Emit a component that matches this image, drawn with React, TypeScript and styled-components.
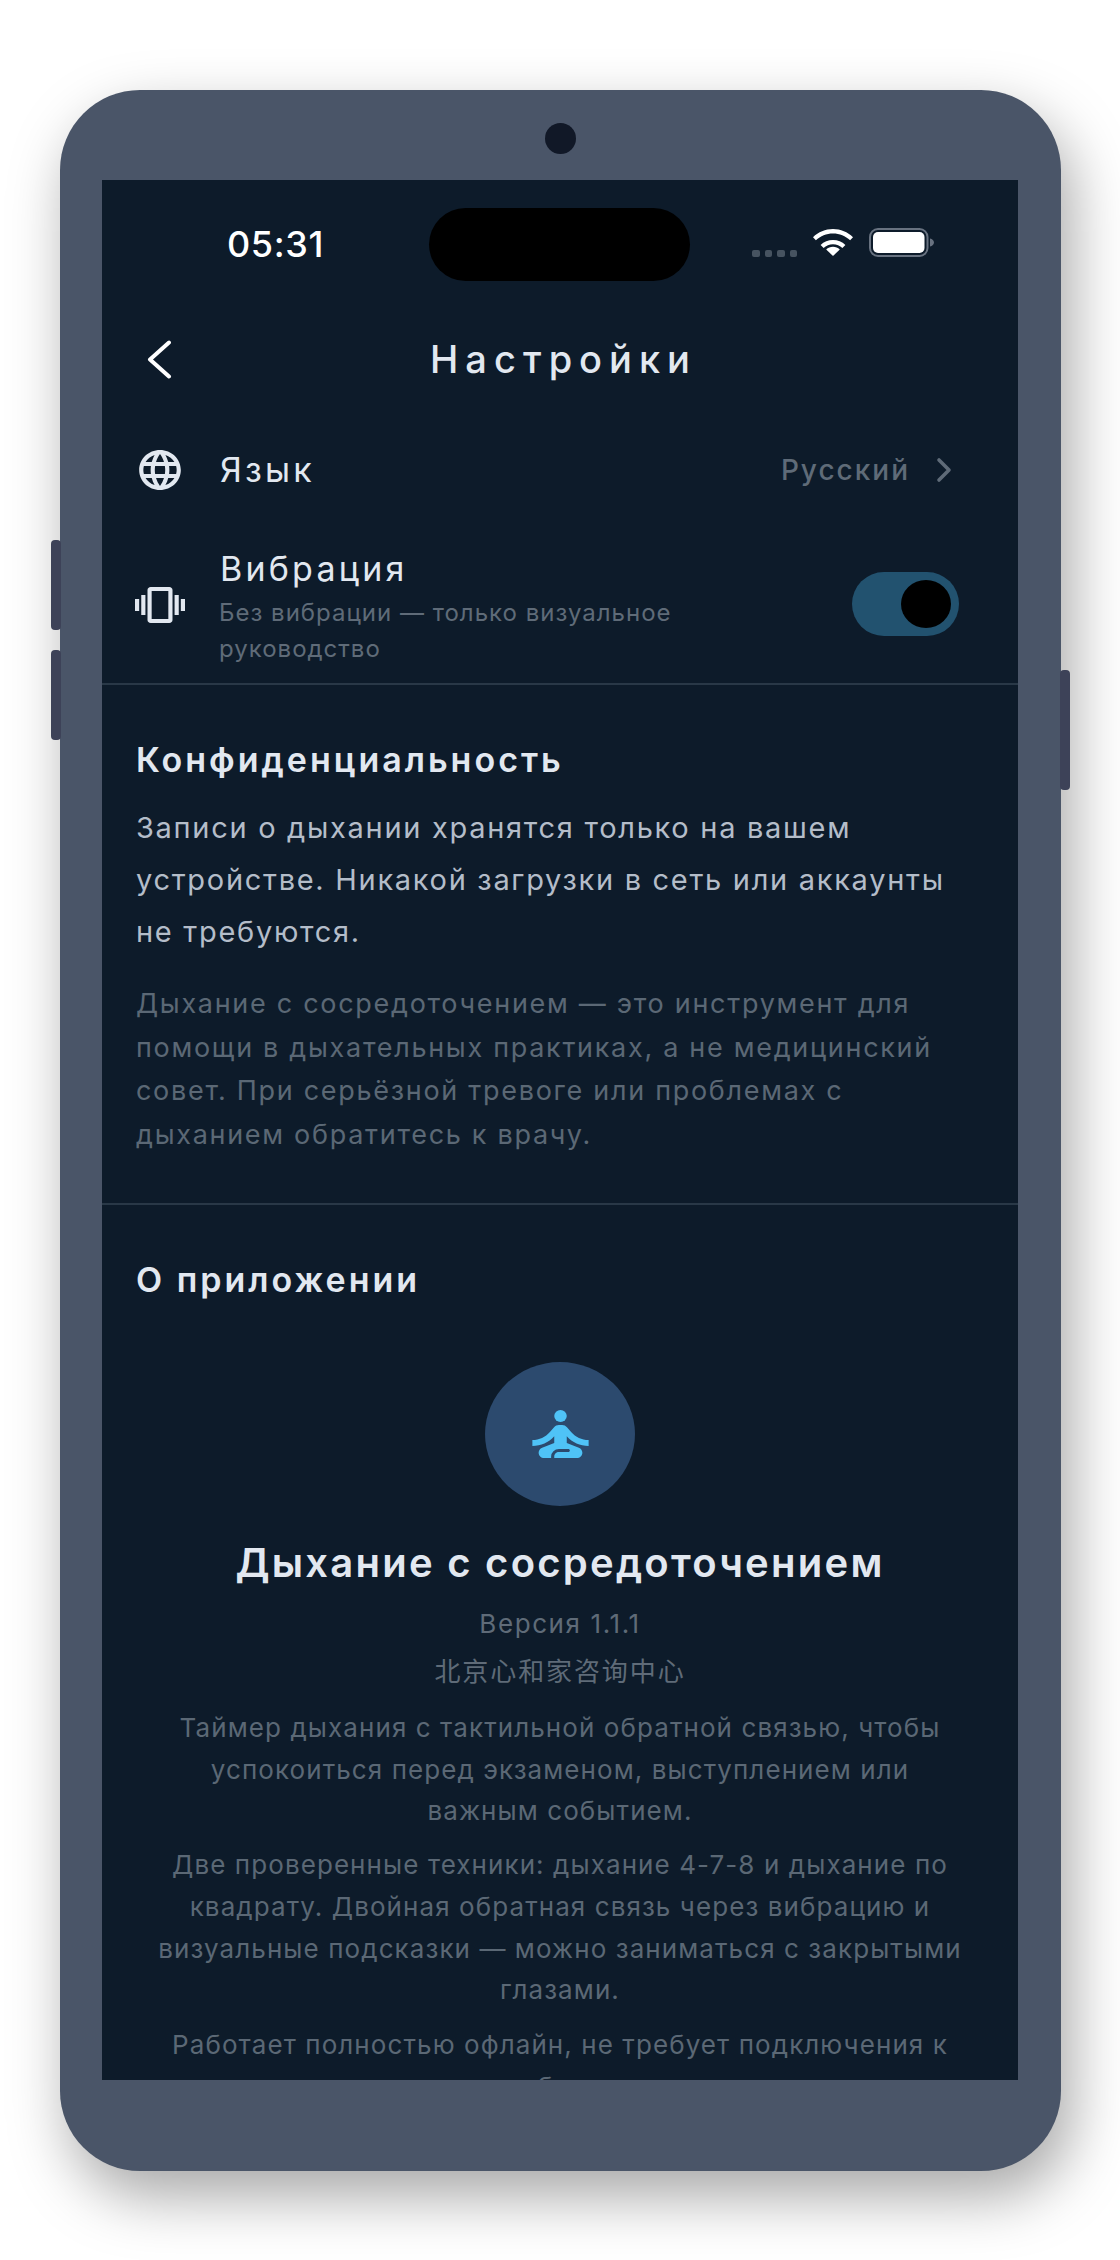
import styled, { createGlobalStyle } from "styled-components";
import { MdLanguage, MdSelfImprovement, MdVibration } from "react-icons/md";

const GlobalStyle = createGlobalStyle`
    html, body {
        margin: 0;
        padding: 0;
        background: #fff;
        overflow: hidden;
    }
    body {
        font-family: Inter, "Noto Sans CJK SC", sans-serif;
    }
`;

const Page = styled.div`
    width: 1120px;
    height: 2260px;
    padding: 90px 0 0 60px;
    box-sizing: border-box;
    overflow: hidden;
`;

const Phone = styled.div`
    position: relative;
    width: 1001px;
    height: 2081px;
    padding-left: 42px;
    box-sizing: border-box;
    background: #4a5568;
    border-radius: 80px;
    box-shadow: 10px 25px 60px rgba(0, 0, 0, 0.35);
`;

const SideButton = styled.div<{ $side: "left" | "right"; $top: number; $height: number }>`
    position: absolute;
    top: ${p => p.$top}px;
    height: ${p => p.$height}px;
    width: 10px;
    ${p => p.$side}: -9px;
    background: #3d4258;
    border-radius: 4px;
`;

const TopBezel = styled.div`
    width: 916px;
    height: 90px;
    display: flex;
    align-items: center;
    justify-content: center;
`;

const Camera = styled.div`
    width: 31px;
    height: 31px;
    margin-top: 6px;
    border-radius: 50%;
    background: #111827;
`;

const Screen = styled.div`
    width: 916px;
    height: 1900px;
    background: #0d1b2a;
    overflow: hidden;
`;

const StatusBar = styled.div`
    height: 124px;
    padding-top: 28px;
    box-sizing: border-box;
    display: grid;
    grid-template-columns: 327px 261px 1fr;
    align-items: start;
`;

const Time = styled.div`
    padding-left: 125px;
    height: 73px;
    line-height: 73px;
    font-size: 36px;
    font-weight: 500;
    letter-spacing: 0.6px;
    color: #fff;
`;

const Island = styled.div`
    height: 73px;
    background: #000;
    border-radius: 37px;
`;

const StatusIcons = styled.div`
    height: 73px;
    padding-left: 62px;
    display: flex;
    align-items: center;
    gap: 16px;
    margin-top: -2px;
`;

const SignalDots = styled.div`
    display: flex;
    gap: 5px;
    margin-top: 22px;
`;

const SignalDot = styled.span`
    width: 7.5px;
    height: 7px;
    border-radius: 2px;
    background: #465360;
`;

const HeaderBar = styled.div`
    height: 110px;
    padding-left: 45px;
    position: relative;
    display: flex;
    align-items: center;
`;

const Title = styled.div`
    position: absolute;
    left: 7px;
    right: 0;
    text-align: center;
    font-size: 38px;
    font-weight: 500;
    letter-spacing: 7px;
    color: #e2e8f0;
`;

const Row = styled.div<{ $height: number }>`
    height: ${p => p.$height}px;
    padding: 0 60px 0 31px;
    display: flex;
    align-items: center;
`;

const RowIcon = styled.div`
    width: 54px;
    margin-right: 33px;
    flex: none;
    display: flex;
    justify-content: center;
    color: #e2e8f0;
`;

const RowBody = styled.div<{ $offset: number }>`
    flex: 1;
    min-width: 0;
    padding-top: ${p => p.$offset}px;
`;

const RowTitle = styled.div`
    font-size: 34px;
    line-height: 42px;
    letter-spacing: 3.2px;
    color: #e2e8f0;
`;

const RowHint = styled.div`
    width: 470px;
    margin: 5px 0 0 -1px;
    font-size: 24px;
    line-height: 36px;
    letter-spacing: 1px;
    color: #5f6b78;
`;

const RowValue = styled.div`
    font-size: 28px;
    font-weight: 500;
    letter-spacing: 2px;
    color: #5f6b78;
`;

const Chevron = styled.svg`
    margin: 0 6px 0 26px;
    flex: none;
`;

const Toggle = styled.div`
    width: 107px;
    height: 64px;
    flex: none;
    margin: -1px -1px 0 0;
    box-sizing: border-box;
    padding: 8px;
    display: flex;
    justify-content: flex-end;
    background: #22526f;
    border-radius: 32px;
`;

const ToggleKnob = styled.div`
    width: 50px;
    height: 48px;
    border-radius: 50%;
    background: #000;
`;

const Section = styled.div<{ $height: number }>`
    height: ${p => p.$height}px;
    box-sizing: border-box;
    padding: 55px 34px 0;
    border-top: 2px solid #293847;
`;

const SectionTitle = styled.div`
    font-size: 34px;
    line-height: 40px;
    font-weight: 600;
    letter-spacing: 3px;
    color: #e2e8f0;
`;

const Lead = styled.p`
    margin: 22px 0 0;
    font-size: 29px;
    line-height: 52px;
    letter-spacing: 1.7px;
    color: #b4bdc9;
`;

const Note = styled.p`
    margin: 24px 0 0;
    font-size: 27px;
    line-height: 43.7px;
    letter-spacing: 1.7px;
    color: #5b6875;
`;

const About = styled.div`
    padding: 0 19px;
    display: flex;
    flex-direction: column;
    align-items: center;
    text-align: center;
`;

const AppBadge = styled.div`
    width: 150px;
    height: 144px;
    margin-top: 62px;
    display: flex;
    align-items: center;
    justify-content: center;
    border-radius: 50%;
    background: #2c4a6e;
    color: #4fc3f7;
`;

const AppName = styled.div`
    margin-top: 33px;
    font-size: 40px;
    line-height: 48px;
    font-weight: 600;
    letter-spacing: 2.25px;
    color: #e2e8f0;
`;

const Meta = styled.div<{ $gap: number; $tracking: number }>`
    margin-top: ${p => p.$gap}px;
    font-size: 26px;
    line-height: 42px;
    letter-spacing: ${p => p.$tracking}px;
    color: #5f6b78;
`;

const Blurb = styled.p<{ $gap: number }>`
    margin: ${p => p.$gap}px 0 0;
    font-size: 26px;
    line-height: 41.7px;
    letter-spacing: 1.08px;
    color: #5b6875;
`;

function WifiIcon() {
    return (
        <svg width="40" height="27" viewBox="0 0 40 27" fill="#fff">
            <path d="M0 8.2C5.4 3 12.3 0 20 0s14.6 3 20 8.2l-2.9 3.1C32.5 7 26.6 4.4 20 4.4S7.5 7 2.9 11.3z" />
            <path d="M7.6 15.9C10.9 12.8 15.2 11 20 11s9.1 1.8 12.4 4.9l-3 3.1C26.9 16.7 23.6 15.3 20 15.3s-6.9 1.4-9.4 3.7z" />
            <path d="M20 27l-6.8-6.6c1.8-1.6 4.2-2.6 6.8-2.6s5 1 6.8 2.6z" />
        </svg>
    );
}

function BatteryIcon() {
    return (
        <svg width="65" height="29" viewBox="0 0 65 29">
            <rect x="1" y="1" width="57.5" height="27" rx="8" fill="none" stroke="#687280" strokeWidth="2" />
            <rect x="4" y="4" width="51.5" height="21" rx="5" fill="#fff" />
            <path d="M61 10.5c2.4.6 4 2.1 4 4s-1.6 3.4-4 4z" fill="#687280" />
        </svg>
    );
}

export default function App() {
    return (
        <Page>
            <GlobalStyle />
            <Phone>
                <SideButton $side="left" $top={450} $height={90} />
                <SideButton $side="left" $top={560} $height={90} />
                <SideButton $side="right" $top={580} $height={120} />
                <TopBezel><Camera /></TopBezel>
                <Screen>
                    <StatusBar>
                        <Time>05:31</Time>
                        <Island />
                        <StatusIcons>
                            <SignalDots>
                                <SignalDot /><SignalDot /><SignalDot /><SignalDot />
                            </SignalDots>
                            <WifiIcon />
                            <BatteryIcon />
                        </StatusIcons>
                    </StatusBar>
                    <HeaderBar>
                        <Title>Настройки</Title>
                        <svg width="25" height="39" viewBox="0 0 25 39" fill="none" stroke="#fff" strokeWidth="4" strokeLinecap="round" strokeLinejoin="round">
                            <path d="M22 2.5L3 19.5l19 17" />
                        </svg>
                    </HeaderBar>
                    <Row $height={112}>
                        <RowIcon><MdLanguage style={{ width: 50, height: 48 }} preserveAspectRatio="none" /></RowIcon>
                        <RowBody $offset={0}><RowTitle>Язык</RowTitle></RowBody>
                        <RowValue>Русский</RowValue>
                        <Chevron width="16" height="26" viewBox="0 0 16 26" fill="none" stroke="#5f6b78" strokeWidth="3.6" strokeLinecap="round" strokeLinejoin="round">
                            <path d="M3 3l10 10L3 23" />
                        </Chevron>
                    </Row>
                    <Row $height={157}>
                        <RowIcon><MdVibration style={{ width: 50, height: 48 }} preserveAspectRatio="none" /></RowIcon>
                        <RowBody $offset={6}>
                            <RowTitle>Вибрация</RowTitle>
                            <RowHint>Без вибрации — только визуальное руководство</RowHint>
                        </RowBody>
                        <Toggle><ToggleKnob /></Toggle>
                    </Row>
                    <Section $height={520}>
                        <SectionTitle>Конфиденциальность</SectionTitle>
                        <Lead>Записи о дыхании хранятся только на вашем устройстве. Никакой загрузки в сеть или аккаунты не требуются.</Lead>
                        <Note>Дыхание с сосредоточением — это инструмент для помощи в дыхательных практиках, а не медицинский совет. При серьёзной тревоге или проблемах с дыханием обратитесь к врачу.</Note>
                    </Section>
                    <Section $height={900}>
                        <SectionTitle>О приложении</SectionTitle>
                        <About>
                            <AppBadge><MdSelfImprovement style={{ width: 75, height: 72 }} preserveAspectRatio="none" /></AppBadge>
                            <AppName>Дыхание с сосредоточением</AppName>
                            <Meta $gap={16} $tracking={1.6}>Версия 1.1.1</Meta>
                            <Meta $gap={6} $tracking={1.9}>北京心和家咨询中心</Meta>
                            <Blurb $gap={14}>Таймер дыхания с тактильной обратной связью, чтобы успокоиться перед экзаменом, выступлением или важным событием.</Blurb>
                            <Blurb $gap={12}>Две проверенные техники: дыхание 4-7-8 и дыхание по квадрату. Двойная обратная связь через вибрацию и визуальные подсказки — можно заниматься с закрытыми глазами.</Blurb>
                            <Blurb $gap={13}>Работает полностью офлайн, не требует подключения к сети и не собирает данные.</Blurb>
                        </About>
                    </Section>
                </Screen>
            </Phone>
        </Page>
    );
}
